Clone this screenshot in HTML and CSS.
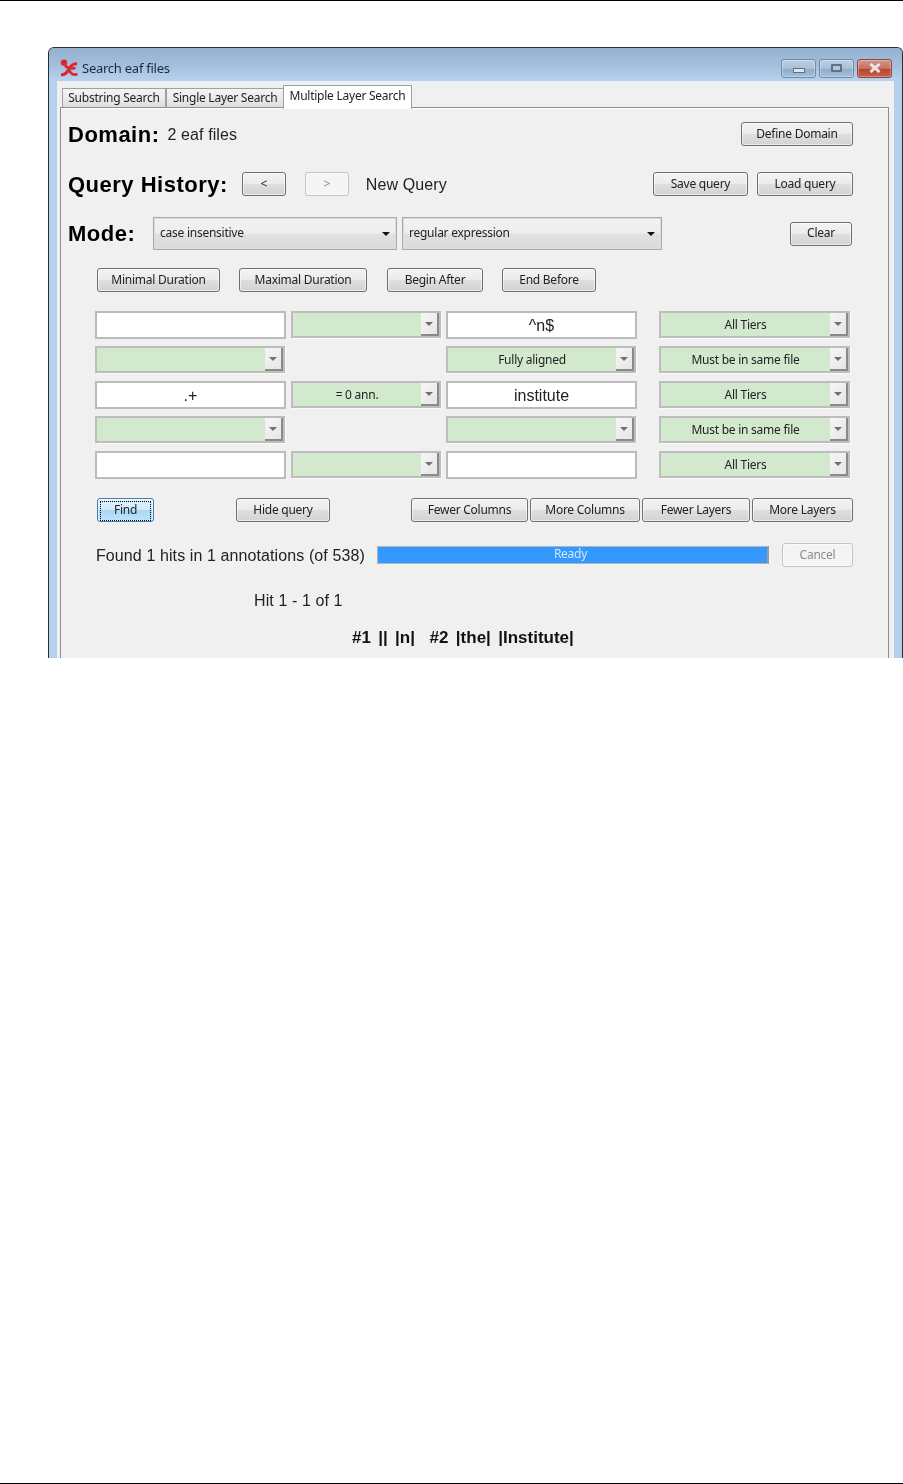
FILE: index.html
```html
<!DOCTYPE html>
<html lang="en">
<head>
  <meta charset="UTF-8">
  <title>Search eaf files</title>
  <link rel="stylesheet" href="styles.css">
</head>
<body>
  <div class="rule rule-top"></div>

  <div class="window">
    <div class="titlebar">
      <svg class="logo" width="18" height="18" viewBox="0 0 18 18">
        <circle cx="4" cy="3.6" r="3.2" fill="#d8282e"/>
        <path d="M1 15.8 C5.5 16 7.5 13 9 10 C10 7.5 12.5 5 17 4.5" fill="none" stroke="#d8282e" stroke-width="3"/>
        <path d="M5 6.5 C7.5 9 11 10 15.5 9 M9.5 11.5 C11 15.5 14 16.5 17.5 15" fill="none" stroke="#d8282e" stroke-width="2.6"/>
      </svg>
      <span class="title">Search eaf files</span>
      <div class="controls">
        <div class="ctl"><span class="min-mark"></span></div>
        <div class="ctl"><span class="max-mark"></span></div>
        <div class="ctl ctl-close">
          <svg width="14" height="10" viewBox="0 0 14 10"><path d="M2.5 1 L11.5 9 M11.5 1 L2.5 9" stroke="#e8e4e2" stroke-width="3"/></svg>
        </div>
      </div>
    </div>

    <div class="client">
      <div class="tabs">
        <div class="tab tab-first">Substring Search</div>
        <div class="tab tab-second">Single Layer Search</div>
        <div class="tab tab-active">Multiple Layer Search</div>
      </div>

      <div class="pane">
        <!-- top rows -->
        <div class="row row-domain">
          <span class="heading">Domain:</span>
          <span class="plain domain-count">2 eaf files</span>
          <button class="btn btn-domain">Define Domain</button>
        </div>

        <div class="row row-history">
          <span class="heading">Query History:</span>
          <button class="btn btn-prev">&lt;</button>
          <button class="btn btn-next" disabled>&gt;</button>
          <span class="plain new-query">New Query</span>
          <button class="btn btn-save">Save query</button>
          <button class="btn btn-load">Load query</button>
        </div>

        <div class="row row-mode">
          <span class="heading heading-mode">Mode:</span>
          <div class="dropdown dropdown-case">case insensitive</div>
          <div class="dropdown dropdown-regex">regular expression</div>
          <button class="btn btn-clear">Clear</button>
        </div>

        <div class="row row-constraints">
          <button class="btn btn-min">Minimal Duration</button>
          <button class="btn btn-max">Maximal Duration</button>
          <button class="btn btn-begin">Begin After</button>
          <button class="btn btn-end">End Before</button>
        </div>

        <!-- query grid -->
        <div class="query-grid">
          <input class="cell-input" type="text" value="">
          <div class="combo"><span class="combo-text"></span><span class="combo-arrow"></span></div>
          <input class="cell-input" type="text" value="^n$">
          <div class="combo combo-tier"><span class="combo-text">All Tiers</span><span class="combo-arrow"></span></div>

          <div class="combo combo-wide"><span class="combo-text"></span><span class="combo-arrow"></span></div>
          <div></div>
          <div class="combo combo-wide"><span class="combo-text">Fully aligned</span><span class="combo-arrow"></span></div>
          <div class="combo combo-tier"><span class="combo-text">Must be in same file</span><span class="combo-arrow"></span></div>

          <input class="cell-input" type="text" value=".+">
          <div class="combo"><span class="combo-text">= 0 ann.</span><span class="combo-arrow"></span></div>
          <input class="cell-input" type="text" value="institute">
          <div class="combo combo-tier"><span class="combo-text">All Tiers</span><span class="combo-arrow"></span></div>

          <div class="combo combo-wide"><span class="combo-text"></span><span class="combo-arrow"></span></div>
          <div></div>
          <div class="combo combo-wide"><span class="combo-text"></span><span class="combo-arrow"></span></div>
          <div class="combo combo-tier"><span class="combo-text">Must be in same file</span><span class="combo-arrow"></span></div>

          <input class="cell-input" type="text" value="">
          <div class="combo"><span class="combo-text"></span><span class="combo-arrow"></span></div>
          <input class="cell-input" type="text" value="">
          <div class="combo combo-tier"><span class="combo-text">All Tiers</span><span class="combo-arrow"></span></div>
        </div>

        <div class="row row-actions">
          <button class="btn btn-find"><span class="focus-ring">Find</span></button>
          <button class="btn btn-hide">Hide query</button>
          <button class="btn btn-fcol">Fewer Columns</button>
          <button class="btn btn-mcol">More Columns</button>
          <button class="btn btn-flay">Fewer Layers</button>
          <button class="btn btn-mlay">More Layers</button>
        </div>

        <div class="row row-status">
          <span class="plain found">Found 1 hits in 1 annotations (of 538)</span>
          <div class="progress">Ready</div>
          <button class="btn btn-cancel" disabled>Cancel</button>
        </div>

        <div class="hit-count plain">Hit 1 - 1 of 1</div>
        <div class="hit-line">#1 || |n| &nbsp;#2 |the| |Institute|</div>
      </div>
    </div>
  </div>

  <div class="rule rule-bottom"></div>
</body>
</html>
```

FILE: styles.css
```css
html, body {
  margin: 0;
  padding: 0;
  background: #fff;
}
body {
  height: 1484px;
  position: relative;
  overflow: hidden;
  font-family: "Noto Sans", sans-serif;
  font-size: 12px;
  letter-spacing: -.25px;
  color: #222;
}
.rule {
  height: 1px;
  background: #000;
}
.rule-bottom {
  margin-top: 825px;
}

/* Window frame */
.window {
  box-sizing: border-box;
  width: 855px;
  height: 611px;
  margin: 46px 0 0 48px;
  border: 1px solid #2b2f33;
  border-bottom: none;
  border-radius: 6px 6px 0 0;
  overflow: hidden;
  background: #b5d0ec;
  display: flex;
  flex-direction: column;
  filter: blur(.3px);
}
.titlebar {
  box-sizing: border-box;
  height: 33px;
  flex: none;
  display: flex;
  align-items: center;
  padding: 7px 10px 0 11px;
  background: linear-gradient(#93b0d0, #a5c0de 55%, #b7d2ee);
}
.logo {
  flex: none;
}
.title {
  margin-left: 4px;
  font-size: 13px;
  color: #1c2a38;
}
.controls {
  margin-left: auto;
  display: flex;
  gap: 3px;
}
.ctl {
  box-sizing: border-box;
  width: 35px;
  height: 19px;
  border: 1px solid #6f8aa6;
  border-radius: 3px;
  background: linear-gradient(#bdd0e3, #a8c0d8 50%, #8fabc7 55%, #a5c1dc);
  box-shadow: inset 0 0 0 1px rgba(255, 255, 255, .3);
  display: flex;
  align-items: center;
  justify-content: center;
}
.min-mark {
  width: 10px;
  height: 3px;
  margin-top: 4px;
  border: 1px solid #5d7186;
  background: #dfe6ec;
}
.max-mark {
  width: 7px;
  height: 4px;
  border: 2px solid #5d7186;
  background: #b7c6d5;
  border-radius: 1px;
}
.ctl-close {
  border-color: #8a4a44;
  background: linear-gradient(#d2968c, #c96f60 50%, #b8432f 55%, #c9604a);
}

/* Client area and tabs */
.client {
  flex: 1;
  margin: 0 8px 0 8px;
  padding: 0 5px 0 3px;
  background: #f0f0f0;
  display: flex;
  flex-direction: column;
  min-height: 0;
}
.tabs {
  height: 26px;
  flex: none;
  display: flex;
  align-items: flex-end;
  padding-left: 2px;
}
.tab {
  box-sizing: border-box;
  height: 19px;
  border: 1px solid #a0a0a0;
  border-bottom: none;
  background: linear-gradient(#f4f4f4, #ebebeb 50%, #dcdcdc);
  text-align: center;
  line-height: 18px;
  white-space: nowrap;
}
.tab-first {
  width: 104px;
}
.tab-second {
  width: 118px;
}
.tab-active {
  width: 129px;
  height: 24px;
  margin-bottom: -2px;
  margin-left: -1px;
  line-height: 20px;
  background: #fff;
  position: relative;
  z-index: 1;
}
.pane {
  flex: 1;
  box-sizing: border-box;
  border: 1px solid #8e8f8f;
  border-bottom: none;
  background: #f0f0f0;
  box-shadow: inset 0 1px 0 #fff;
  padding-top: 14px;
  min-height: 0;
}

/* Rows */
.row {
  display: flex;
  align-items: center;
  height: 24px;
  padding-right: 35px;
}
.row-domain,
.row-history,
.row-mode {
  padding-left: 7px;
}
.row-history {
  margin-top: 26px;
}
.row-mode {
  margin-top: 21px;
  height: 33px;
}
.row-constraints {
  margin-top: 18px;
  padding-left: 36px;
}
.row-actions {
  margin-top: 19px;
  padding-left: 36px;
}
.row-status {
  margin-top: 21px;
  padding-left: 35px;
}
.heading {
  padding-top: 1px;
  font-family: "Liberation Sans", Arial, sans-serif;
  font-size: 22px;
  font-weight: bold;
  letter-spacing: .5px;
  color: #000;
  white-space: nowrap;
}
.heading-mode {
  width: 85px;
}
.plain {
  padding-top: 2px;
  font-family: "Liberation Sans", Arial, sans-serif;
  font-size: 16px;
  letter-spacing: .1px;
  color: #222;
  white-space: nowrap;
}
.domain-count {
  margin-left: 8px;
}
.new-query {
  margin-left: 17px;
}

/* Buttons */
.btn {
  box-sizing: border-box;
  height: 24px;
  padding: 0 0 2px;
  flex: none;
  border: 1px solid #707070;
  border-radius: 3px;
  background: linear-gradient(#f3f3f3, #ebebeb 48%, #dedede 52%, #d3d3d3);
  box-shadow: inset 0 0 0 1px rgba(255, 255, 255, .55);
  font-family: "Noto Sans", sans-serif;
  font-size: 12px;
  letter-spacing: -.25px;
  color: #222;
  white-space: nowrap;
}
.btn:disabled {
  border-color: #c4c4c4;
  background: #f4f4f4;
  color: #8c8c8c;
}
.btn-domain { width: 112px; margin-left: auto; }
.btn-prev { width: 44px; margin-left: 14px; }
.btn-next { width: 44px; margin-left: 19px; }
.btn-save { width: 95px; margin-left: auto; }
.btn-load { width: 96px; margin-left: 9px; }
.btn-clear { width: 62px; margin-left: auto; margin-right: 1px; }
.btn-min { width: 123px; }
.btn-max { width: 128px; margin-left: 19px; }
.btn-begin { width: 96px; margin-left: 20px; }
.btn-end { width: 94px; margin-left: 19px; }
.btn-find {
  width: 57px;
  padding: 2px;
  border-color: #3c7fb1;
  background: linear-gradient(#e6f3fc, #d0e9fa 48%, #a9d9f6 52%, #bfe3f9);
}
.focus-ring {
  display: block;
  height: 18px;
  line-height: 16px;
  border: 1px dotted #000;
}
.btn-hide { width: 94px; margin-left: 82px; }
.btn-fcol { width: 117px; margin-left: 81px; }
.btn-mcol { width: 110px; margin-left: 2px; }
.btn-flay { width: 108px; margin-left: 2px; }
.btn-mlay { width: 101px; margin-left: 2px; }
.btn-cancel { width: 71px; margin-left: auto; }

/* Mode dropdowns */
.dropdown {
  box-sizing: border-box;
  height: 33px;
  padding-left: 6px;
  border: 1px solid #a9a9a9;
  box-shadow: inset 0 0 0 1px #dcdcdc;
  background: linear-gradient(#f2f2f2, #eeeeee 48%, #e2e2e2 52%, #dadada);
  line-height: 30px;
  position: relative;
  flex: none;
}
.dropdown::after {
  content: "";
  position: absolute;
  right: 6px;
  top: 14px;
  border-left: 4px solid transparent;
  border-right: 4px solid transparent;
  border-top: 4px solid #111;
}
.dropdown-case { width: 244px; }
.dropdown-regex { width: 260px; margin-left: 5px; }

/* Query grid */
.query-grid {
  display: grid;
  grid-template-columns: 191px 150px 191px 208px;
  grid-auto-rows: 28px;
  column-gap: 5px;
  row-gap: 7px;
  margin: 19px 0 0 34px;
}
.cell-input {
  box-sizing: border-box;
  width: 100%;
  height: 28px;
  margin: 0;
  padding: 2px 0 0;
  border: 2px solid #bbbbbb;
  border-radius: 0;
  outline: none;
  background: #fff;
  font-family: "Liberation Sans", Arial, sans-serif;
  font-size: 16px;
  color: #222;
  text-align: center;
}
.combo {
  box-sizing: border-box;
  height: 27px;
  border: 2px solid #bdbdbd;
  background: #d3e9cd;
  display: flex;
  box-shadow: 1px 1px 0 #fafafa;
}
.combo-wide {
  margin-right: 1px;
}
.combo-tier {
  margin-left: 17px;
}
.combo-text {
  flex: 1;
  text-align: center;
  line-height: 23px;
  white-space: nowrap;
}
.combo-arrow {
  flex: none;
  width: 18px;
  box-sizing: border-box;
  position: relative;
  background: linear-gradient(135deg, #f6f6f6, #e6e6e6);
  border-right: 2px solid #8a8a8a;
  border-bottom: 2px solid #8a8a8a;
}
.combo-arrow::after {
  content: "";
  position: absolute;
  left: 4px;
  top: 9px;
  border-left: 4px solid transparent;
  border-right: 4px solid transparent;
  border-top: 4px solid #707070;
}

/* Status */
.found {
  width: 281px;
  flex: none;
}
.progress {
  box-sizing: border-box;
  width: 392px;
  height: 18px;
  flex: none;
  padding-right: 4px;
  border: 1px solid #b4b4b4;
  border-right: 2px solid #9a9a9a;
  background: #3399ff;
  color: #cfe6ff;
  text-align: center;
  line-height: 13px;
}
.hit-count {
  margin: 22px 0 0 193px;
  line-height: 20px;
}
.hit-line {
  margin: 17px 0 0 291px;
  line-height: 20px;
  font-family: "Liberation Sans", Arial, sans-serif;
  font-size: 17px;
  font-weight: bold;
  letter-spacing: 0;
  word-spacing: 2.6px;
  color: #111;
  white-space: nowrap;
}
```
